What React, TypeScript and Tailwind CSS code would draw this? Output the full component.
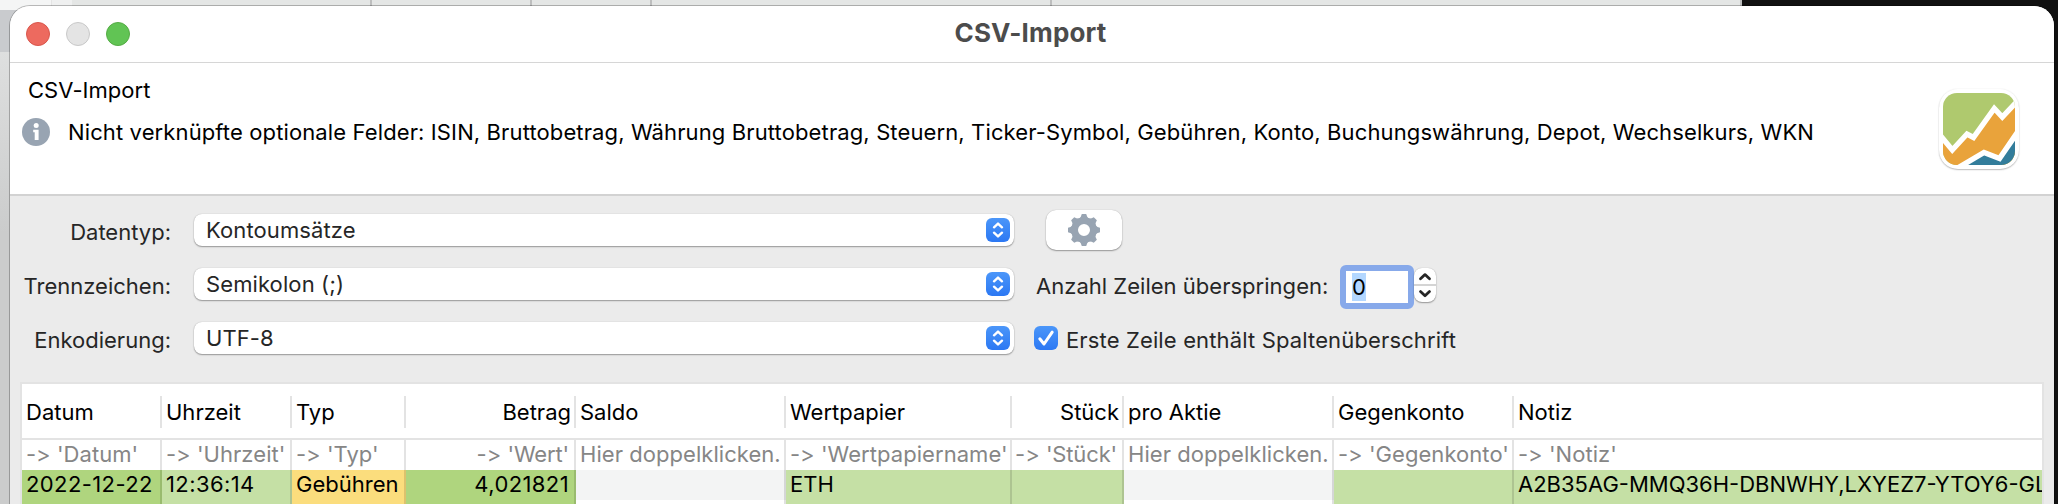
import type { ReactNode } from "react";

type Column = {
  title: string;
  mapping: string;
  value?: string;
  width: string;
  fill: string;
  right?: boolean;
};

const GREEN = "bg-[#afd57e]";
const LIGHT = "bg-[#c5e0a5]";

const columns: Column[] = [
  { title: "Datum", mapping: "'Datum'", value: "2022-12-22", width: "w-[140px]", fill: GREEN },
  { title: "Uhrzeit", mapping: "'Uhrzeit'", value: "12:36:14", width: "w-[130px]", fill: LIGHT },
  { title: "Typ", mapping: "'Typ'", value: "Gebühren", width: "w-[114px]", fill: "bg-[#fbdd7d]" },
  { title: "Betrag", mapping: "'Wert'", value: "4,021821", width: "w-[170px]", fill: GREEN, right: true },
  { title: "Saldo", mapping: "", width: "w-[210px]", fill: "" },
  { title: "Wertpapier", mapping: "'Wertpapiername'", value: "ETH", width: "w-[226px]", fill: LIGHT },
  { title: "Stück", mapping: "'Stück'", width: "w-[112px]", fill: LIGHT, right: true },
  { title: "pro Aktie", mapping: "", width: "w-[210px]", fill: "" },
  { title: "Gegenkonto", mapping: "'Gegenkonto'", width: "w-[180px]", fill: LIGHT },
  { title: "Notiz", mapping: "'Notiz'", value: "A2B35AG-MMQ36H-DBNWHY,LXYEZ7-YTOY6-GL", width: "w-[528px]", fill: LIGHT },
];

function TitleBar() {
  return (
    <header className="grid h-[57px] grid-cols-[1fr_auto_1fr] border-b border-[#d6d6d6] pt-4">
      <div className="flex gap-4 pl-4">
        <span className="size-6 rounded-full border border-[#d8564c] bg-[#ed6a5f]" />
        <span className="size-6 rounded-full border border-[#c8c8c8] bg-[#e4e4e4]" />
        <span className="size-6 rounded-full border border-[#55ab45] bg-[#61c454]" />
      </div>
      <h1 className="-mt-2 pr-[3px] text-[26px] leading-[38px] font-bold tracking-[0.17px] text-[#4c4c4c]">CSV-Import</h1>
    </header>
  );
}

function InfoIcon() {
  return (
    <svg viewBox="0 0 28 28" className="size-7">
      <circle cx="14" cy="14" r="14" fill="#98a4b2" />
      <circle cx="14.2" cy="7.6" r="2.5" fill="#fff" />
      <path d="M11.2 11.8h5.4v10.2h-3.9v-7.8h-1.5z" fill="#fff" />
    </svg>
  );
}

function AppLogo() {
  return (
    <div className="mt-[26px] mr-[35px] size-20 rounded-[19px] bg-white p-1 shadow-[0_1px_1.5px_rgba(0,0,0,0.25),0_0_2px_rgba(0,0,0,0.07)]">
      <svg viewBox="0 0 72 72" className="size-[72px]">
        <defs>
          <clipPath id="tile">
            <rect width="72" height="72" rx="14" />
          </clipPath>
        </defs>
        <g clipPath="url(#tile)">
          <rect width="72" height="72" fill="#afc96e" />
          <path d="M-4 41 9.3 57 24 41 30.5 44.5 51.3 15.5 59.3 24 76 6.5V76H-4z" fill="#e9a33b" />
          <path d="M13 76 41 59.5 56.5 65.5 76 37V76z" fill="#337d9b" />
          <path d="M-4 41 9.3 57 24 41 30.5 44.5 51.3 15.5 59.3 24 76 6.5" fill="none" stroke="#fff" strokeWidth="5.4" />
          <path d="M13 76 41 59.5 56.5 65.5 76 37" fill="none" stroke="#fff" strokeWidth="5.4" />
        </g>
      </svg>
    </div>
  );
}

function Banner() {
  return (
    <section className="flex h-[133px] justify-between border-b-2 border-[#d2d2d2]">
      <div className="text-black">
        <h2 className="pt-3 pl-[18px] leading-[30px] tracking-[0.05px]">CSV-Import</h2>
        <div className="mt-[13px] flex items-start pl-3">
          <InfoIcon />
          <p className="-mt-px pl-[18px] leading-[30px] tracking-[0.12px] whitespace-nowrap">
            Nicht verknüpfte optionale Felder: ISIN, Bruttobetrag, Währung Bruttobetrag, Steuern, Ticker-Symbol,
            Gebühren, Konto, Buchungswährung, Depot, Wechselkurs, WKN
          </p>
        </div>
      </div>
      <AppLogo />
    </section>
  );
}

function Select({ value }: { value: string }) {
  return (
    <div className="flex h-8 w-[820px] items-center justify-between rounded-lg bg-white pr-1 pl-3 shadow-[0_1px_1.5px_rgba(0,0,0,0.35),0_0_1px_rgba(0,0,0,0.25)]">
      <span className="tracking-[0.1px]">{value}</span>
      <span className="size-6 rounded-md bg-linear-to-b from-[#4b96f9] to-[#2c78f3]">
        <svg viewBox="0 0 24 24" className="size-6" fill="none" stroke="#fff" strokeWidth="2.4" strokeLinecap="round" strokeLinejoin="round">
          <path d="M8 9.3 12 5.6l4 3.7M8 14.7l4 3.7 4-3.7" />
        </svg>
      </span>
    </div>
  );
}

function FormRow({ label, value, children }: { label: string; value: string; children: ReactNode }) {
  return (
    <div className="flex h-8">
      <label className="w-[161px] pt-0.5 text-right leading-8">{label}</label>
      <div className="ml-[23px]">
        <Select value={value} />
      </div>
      {children}
    </div>
  );
}

const teeth = [0, 45, 90, 135, 180, 225, 270, 315];

function GearButton() {
  return (
    <button className="-mt-1 ml-8 flex h-10 w-[76px] items-center justify-center rounded-[10px] bg-white shadow-[0_1px_1.5px_rgba(0,0,0,0.35),0_0_1px_rgba(0,0,0,0.25)]">
      <svg viewBox="-16 -16 32 32" className="size-8" fill="#98a4b2">
        <circle r="9.4" fill="none" stroke="#98a4b2" strokeWidth="6.8" />
        {teeth.map((angle) => (
          <path key={angle} d="M-5.4-11Q-2.8-12.6-2.2-16H2.2Q2.8-12.6 5.4-11z" transform={`rotate(${angle})`} />
        ))}
      </svg>
    </button>
  );
}

function SkipLines() {
  return (
    <div className="flex">
      <label className="w-[294px] pt-0.5 pl-[22px] leading-8 tracking-[0.02px] whitespace-nowrap">Anzahl Zeilen überspringen:</label>
      <div className="-mt-[3px] ml-8 flex h-11 w-[74px] items-center rounded-md border-[6px] border-[#87a9ea] bg-white pl-1.5 text-black">
        <span className="w-3.5 bg-[#b3d7ff] text-center leading-7">0</span>
      </div>
      <div className="flex h-[34px] w-[22px] flex-col rounded-lg bg-white shadow-[0_1px_1.5px_rgba(0,0,0,0.35),0_0_1px_rgba(0,0,0,0.25)]">
        <svg viewBox="0 0 22 34" className="h-[34px] w-[22px]" fill="none" stroke="#262626" strokeWidth="2.8" strokeLinecap="round" strokeLinejoin="round">
          <path d="M0 17h22" stroke="#d4d4d4" strokeWidth="2" strokeLinecap="butt" />
          <path d="M6.5 10.8 11 6.6l4.5 4.2M6.5 23.6l4.5 4.2 4.5-4.2" />
        </svg>
      </div>
    </div>
  );
}

function HeaderCheckbox() {
  return (
    <label className="ml-5 flex">
      <span className="mt-1 size-6 rounded-md bg-linear-to-b from-[#4b96f9] to-[#2c78f3]">
        <svg viewBox="0 0 24 24" className="size-6" fill="none" stroke="#fff" strokeWidth="3" strokeLinecap="round" strokeLinejoin="round">
          <path d="M5.8 12.8 10 18 18.2 6.2" />
        </svg>
      </span>
      <span className="pt-0.5 pl-2 leading-8 tracking-[0.14px] whitespace-nowrap">Erste Zeile enthält Spaltenüberschrift</span>
    </label>
  );
}

function Mapping({ target, right }: { target: string; right?: boolean }) {
  if (!target) return <span className="tracking-[0.05px]">Hier doppelklicken.</span>;
  return (
    <>
      <span className="[font-feature-settings:'calt'_0]">-&gt;</span>{" "}
      <span className={right ? "tracking-[-0.15px]" : "tracking-[0.06px]"}>{target}</span>
    </>
  );
}

function Table() {
  return (
    <div className="flex h-[124px] w-[2024px] overflow-hidden border-2 border-b-0 border-[#e3e3e3] bg-white whitespace-nowrap text-black">
      {columns.map((c, i) => {
        const last = i === columns.length - 1;
        const line = last ? "" : "border-r-2";
        const align = c.right ? "text-right pr-[5px]" : "pl-1";
        return (
          <div key={c.title} className={`${c.width} shrink-0 overflow-hidden`}>
            <div className="h-14 border-b-2 border-[#e3e3e3] pt-3">
              <div className={`h-8 border-[#e3e3e3] leading-8 ${line} ${c.right ? "pr-[3px] text-right" : "pl-1"}`}>{c.title}</div>
            </div>
            <div className={`h-[30px] border-[#e3e3e3] leading-7 text-[#868686] ${line} ${align}`}>
              <Mapping target={c.mapping} right={c.right} />
            </div>
            <div className={`h-[30px] border-black/12 leading-7 ${c.fill || "bg-[#f3f4f4]"} ${line} ${align}`}>
              <span className={i === 0 || i === 1 || i === 3 ? "tracking-[0.4px]" : ""}>{c.value}</span>
            </div>
            <div className={`h-[30px] border-black/12 ${c.fill} ${line}`} />
          </div>
        );
      })}
    </div>
  );
}

export default function App() {
  return (
    <div className="relative h-[504px] w-[2058px] overflow-hidden bg-[#111] font-['Inter',sans-serif] text-[22px] leading-7 text-[#262626]">
      <div className="absolute top-0 left-0 flex h-[504px] w-[1742px] flex-col bg-[#cfd1d1]">
        <div className="flex h-[10px]">
          <span className="w-[52px] border-r border-[#e4e4e4] bg-[#f4f5f5]" />
          <span className="w-5 bg-[#eff0f0]" />
          <span className="w-[300px] border-r-2 border-[#bdbebe] bg-[#e4e6e5]" />
          <span className="w-[160px] border-r-2 border-[#bdbebe] bg-[#e4e6e5]" />
          <span className="w-[120px] border-r-2 border-[#bdbebe] bg-[#e4e6e5]" />
          <span className="w-[400px] border-r-2 border-[#bdbebe] bg-[#e4e6e5]" />
          <span className="flex-1 border-r-2 border-[#bdbebe] bg-[#e4e6e5]" />
        </div>
        <div className="h-[42px] w-14 bg-[#c9cbce]" />
        <div className="w-14 flex-1 bg-linear-to-b from-[#dedfdf] to-[#cbcccc] to-40%" />
      </div>
      <div className="absolute top-1.5 left-2.5 h-[520px] w-[2044px] overflow-hidden rounded-t-[20px] bg-[#ebebeb] shadow-[0_0_0_1px_rgba(0,0,0,0.25)]">
        <div className="bg-white">
          <TitleBar />
          <Banner />
        </div>
        <div className="flex flex-col gap-[22px] pt-[18px] pb-7">
          <FormRow label="Datentyp:" value="Kontoumsätze">
            <GearButton />
          </FormRow>
          <FormRow label="Trennzeichen:" value="Semikolon (;)">
            <SkipLines />
          </FormRow>
          <FormRow label="Enkodierung:" value="UTF-8">
            <HeaderCheckbox />
          </FormRow>
        </div>
        <div className="pl-2.5">
          <Table />
        </div>
      </div>
    </div>
  );
}
